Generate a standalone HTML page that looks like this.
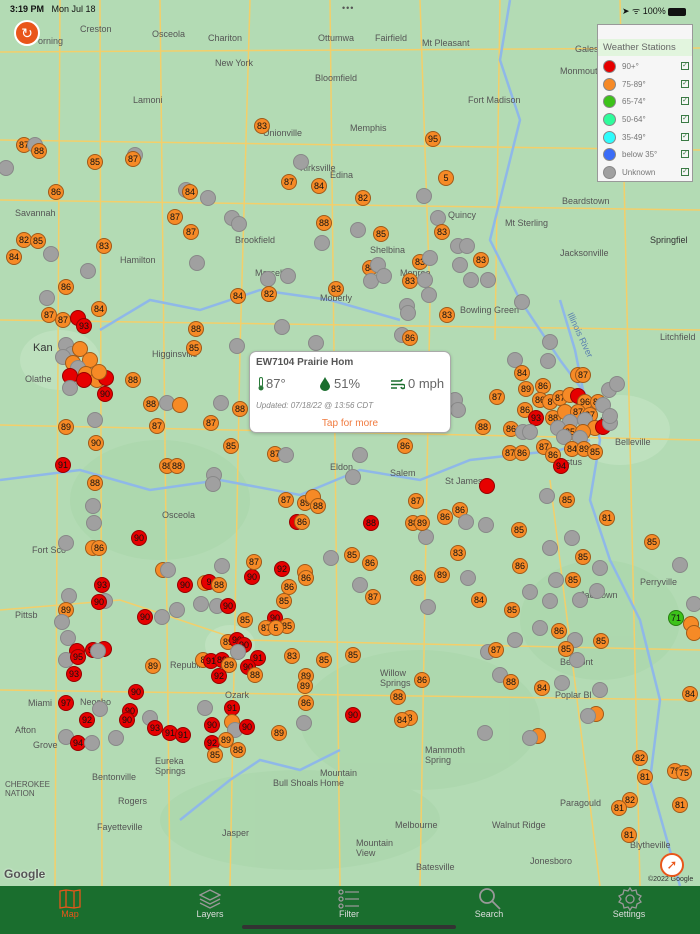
<!DOCTYPE html>
<html><head><meta charset="utf-8">
<style>
*{margin:0;padding:0;box-sizing:border-box}
body{width:700px;height:934px;overflow:hidden;position:relative;font-family:"Liberation Sans",sans-serif;background:#b3dbb4}
.m{position:absolute;width:16px;height:16px;border-radius:50%;font-size:9px;line-height:14px;text-align:center;color:#111;border:1px solid rgba(0,0,0,.35);margin:-8px 0 0 -8px}
.o{background:#f68a26}.r{background:#e60000}.g{background:#a0a0a0;border-color:#888}.gr{background:#3cc21a}
.l{position:absolute;font-size:9px;color:#555;white-space:nowrap}
#tab{position:absolute;left:0;top:886px;width:700px;height:48px;background:#1a6e2e}
.t{position:absolute;top:23px;font-size:9px;color:#ddd;width:80px;text-align:center}
.lg span.n{position:absolute;left:24px;top:3px;font-size:8px;color:#777}
</style></head><body>
<svg width="700" height="886" style="position:absolute;left:0;top:0">
<g fill="#a6d4a7" opacity=".45"><ellipse cx="160" cy="500" rx="90" ry="60"/><ellipse cx="420" cy="720" rx="120" ry="70"/><ellipse cx="300" cy="820" rx="140" ry="50"/><ellipse cx="600" cy="620" rx="80" ry="60"/></g>
<g fill="#c5e5c4" opacity=".6"><ellipse cx="60" cy="360" rx="40" ry="30"/><ellipse cx="620" cy="430" rx="50" ry="35"/><ellipse cx="230" cy="645" rx="25" ry="20"/></g>
<g fill="none" stroke="#f3cf6a" stroke-width="1.5">
<path d="M0 52 L700 48"/><path d="M0 320 L700 330"/><path d="M60 0 L55 886"/><path d="M100 0 L102 886"/><path d="M250 0 L240 350 L230 886"/><path d="M0 425 L700 440"/><path d="M0 610 L120 600 L240 640 L700 650"/><path d="M420 0 L430 300 L420 886"/><path d="M550 480 L600 886"/><path d="M0 690 L700 700"/><path d="M160 0 L170 886"/><path d="M330 0 L340 886"/><path d="M500 0 L495 340"/><path d="M0 200 L700 210"/><path d="M0 140 L700 150"/><path d="M620 0 L640 886"/>
</g>
<g fill="none" stroke="#8fb8e8" stroke-width="2.5">
<path d="M510 0 L500 60 L520 120 L500 200 L490 240 L520 300 L560 360 L590 400 L600 440 L590 500 L610 560 L640 620 L660 700 L650 780 L680 886"/>
<path d="M0 480 L80 470 L150 490 L220 480 L300 495 L360 470 L420 480 L470 460 L560 450 L590 440"/>
<path d="M100 330 L150 300 L200 310 L260 290 L330 300 L400 320"/>
<path d="M560 300 L575 350 L585 400"/>
<path d="M180 820 L230 780 L260 760 L300 770 L340 750"/>
</g>
</svg>
<div class="l" style="left:80px;top:24px">Creston</div><div class="l" style="left:152px;top:29px">Osceola</div><div class="l" style="left:208px;top:33px">Chariton</div><div class="l" style="left:318px;top:33px">Ottumwa</div><div class="l" style="left:375px;top:33px">Fairfield</div><div class="l" style="left:422px;top:38px">Mt Pleasant</div><div class="l" style="left:575px;top:44px">Galesb</div><div class="l" style="left:38px;top:36px">orning</div>
<div class="l" style="left:215px;top:58px">New York</div><div class="l" style="left:560px;top:66px">Monmouth</div><div class="l" style="left:315px;top:73px">Bloomfield</div><div class="l" style="left:468px;top:95px">Fort Madison</div><div class="l" style="left:133px;top:95px">Lamoni</div><div class="l" style="left:350px;top:123px">Memphis</div><div class="l" style="left:263px;top:128px">Unionville</div><div class="l" style="left:300px;top:163px">Kirksville</div><div class="l" style="left:330px;top:170px">Edina</div><div class="l" style="left:15px;top:208px">Savannah</div><div class="l" style="left:235px;top:235px">Brookfield</div><div class="l" style="left:120px;top:255px">Hamilton</div><div class="l" style="left:370px;top:245px">Shelbina</div><div class="l" style="left:560px;top:248px">Jacksonville</div><div class="l" style="left:650px;top:235px;color:#333">Springfiel</div><div class="l" style="left:505px;top:218px">Mt Sterling</div><div class="l" style="left:448px;top:210px">Quincy</div><div class="l" style="left:562px;top:196px">Beardstown</div><div class="l" style="left:400px;top:268px">Monroe</div><div class="l" style="left:255px;top:268px">Marceline</div><div class="l" style="left:320px;top:293px">Moberly</div><div class="l" style="left:460px;top:305px">Bowling Green</div><div class="l" style="left:33px;top:342px;font-size:11px;color:#333">Kan</div><div class="l" style="left:25px;top:374px">Olathe</div><div class="l" style="left:152px;top:349px">Higginsville</div><div class="l" style="left:330px;top:462px">Eldon</div><div class="l" style="left:162px;top:510px">Osceola</div><div class="l" style="left:32px;top:545px">Fort Sco</div><div class="l" style="left:15px;top:610px">Pittsb</div><div class="l" style="left:170px;top:660px">Republic</div><div class="l" style="left:225px;top:690px">Ozark</div><div class="l" style="left:80px;top:697px">Neosho</div><div class="l" style="left:28px;top:698px">Miami</div><div class="l" style="left:15px;top:725px">Afton</div><div class="l" style="left:33px;top:740px">Grove</div><div class="l" style="left:155px;top:756px">Eureka</div><div class="l" style="left:155px;top:766px">Springs</div><div class="l" style="left:92px;top:772px">Bentonville</div><div class="l" style="left:118px;top:796px">Rogers</div><div class="l" style="left:97px;top:822px">Fayetteville</div><div class="l" style="left:5px;top:780px;font-size:8px">CHEROKEE<br>NATION</div><div class="l" style="left:273px;top:778px">Bull Shoals</div><div class="l" style="left:320px;top:768px">Mountain<br>Home</div><div class="l" style="left:222px;top:828px">Jasper</div><div class="l" style="left:395px;top:820px">Melbourne</div><div class="l" style="left:356px;top:838px">Mountain<br>View</div><div class="l" style="left:416px;top:862px">Batesville</div><div class="l" style="left:492px;top:820px">Walnut Ridge</div><div class="l" style="left:530px;top:856px">Jonesboro</div><div class="l" style="left:630px;top:840px">Blytheville</div><div class="l" style="left:560px;top:798px">Paragould</div><div class="l" style="left:425px;top:745px">Mammoth<br>Spring</div><div class="l" style="left:380px;top:668px">Willow<br>Springs</div><div class="l" style="left:560px;top:657px">Belmont</div><div class="l" style="left:640px;top:577px">Perryville</div><div class="l" style="left:615px;top:437px">Belleville</div><div class="l" style="left:555px;top:457px">Festus</div><div class="l" style="left:600px;top:413px;font-size:12px;color:#333">uis</div><div class="l" style="left:660px;top:332px">Litchfield</div><div class="l" style="left:445px;top:476px">St James</div><div class="l" style="left:580px;top:590px">Jacktown</div><div class="l" style="left:555px;top:690px">Poplar Bl</div><div class="l" style="left:390px;top:468px">Salem</div><div class="l" style="left:556px;top:330px;color:#5a7fb0;transform:rotate(65deg)">Illinois River</div>

<div id="mk">
<div class="m o" style="left:24px;top:145px">87</div><div class="m g" style="left:35px;top:145px"></div><div class="m o" style="left:39px;top:151px">88</div><div class="m g" style="left:6px;top:168px"></div><div class="m o" style="left:95px;top:162px">85</div><div class="m g" style="left:135px;top:155px"></div><div class="m o" style="left:133px;top:159px">87</div><div class="m o" style="left:262px;top:126px">83</div><div class="m o" style="left:433px;top:139px">95</div><div class="m g" style="left:301px;top:162px"></div><div class="m o" style="left:289px;top:182px">87</div><div class="m o" style="left:319px;top:186px">84</div><div class="m g" style="left:186px;top:190px"></div><div class="m o" style="left:190px;top:192px">84</div><div class="m g" style="left:208px;top:198px"></div><div class="m o" style="left:363px;top:198px">82</div><div class="m o" style="left:56px;top:192px">86</div><div class="m o" style="left:175px;top:217px">87</div><div class="m o" style="left:191px;top:232px">87</div><div class="m g" style="left:232px;top:218px"></div><div class="m g" style="left:239px;top:224px"></div><div class="m o" style="left:324px;top:223px">88</div><div class="m g" style="left:322px;top:243px"></div><div class="m g" style="left:358px;top:230px"></div><div class="m o" style="left:381px;top:234px">85</div><div class="m g" style="left:424px;top:196px"></div><div class="m o" style="left:446px;top:178px">5</div><div class="m g" style="left:438px;top:218px"></div><div class="m o" style="left:442px;top:232px">83</div><div class="m g" style="left:458px;top:246px"></div><div class="m g" style="left:467px;top:246px"></div><div class="m o" style="left:481px;top:260px">83</div><div class="m g" style="left:460px;top:265px"></div><div class="m g" style="left:471px;top:280px"></div><div class="m g" style="left:488px;top:280px"></div><div class="m o" style="left:420px;top:262px">83</div><div class="m o" style="left:24px;top:240px">82</div><div class="m o" style="left:38px;top:241px">85</div><div class="m g" style="left:51px;top:254px"></div><div class="m o" style="left:14px;top:257px">84</div><div class="m o" style="left:104px;top:246px">83</div><div class="m g" style="left:88px;top:271px"></div><div class="m g" style="left:197px;top:263px"></div><div class="m g" style="left:268px;top:279px"></div><div class="m g" style="left:288px;top:276px"></div><div class="m o" style="left:269px;top:294px">82</div><div class="m o" style="left:238px;top:296px">84</div><div class="m o" style="left:336px;top:289px">83</div><div class="m o" style="left:370px;top:268px">84</div><div class="m g" style="left:378px;top:265px"></div><div class="m g" style="left:371px;top:281px"></div><div class="m g" style="left:384px;top:276px"></div><div class="m o" style="left:410px;top:281px">83</div><div class="m g" style="left:425px;top:280px"></div><div class="m g" style="left:429px;top:295px"></div><div class="m g" style="left:407px;top:306px"></div><div class="m g" style="left:408px;top:313px"></div><div class="m g" style="left:430px;top:258px"></div><div class="m o" style="left:447px;top:315px">83</div><div class="m g" style="left:522px;top:302px"></div><div class="m o" style="left:66px;top:287px">86</div><div class="m o" style="left:99px;top:309px">84</div><div class="m g" style="left:47px;top:298px"></div><div class="m o" style="left:49px;top:315px">87</div><div class="m o" style="left:63px;top:320px">87</div><div class="m r" style="left:78px;top:318px"></div><div class="m r" style="left:84px;top:326px">93</div><div class="m o" style="left:196px;top:329px">88</div><div class="m o" style="left:194px;top:348px">85</div><div class="m g" style="left:282px;top:327px"></div><div class="m g" style="left:316px;top:343px"></div><div class="m g" style="left:237px;top:346px"></div><div class="m g" style="left:402px;top:335px"></div><div class="m o" style="left:410px;top:338px">86</div><div class="m g" style="left:550px;top:342px"></div><div class="m g" style="left:515px;top:360px"></div><div class="m o" style="left:522px;top:373px">84</div><div class="m g" style="left:548px;top:361px"></div><div class="m o" style="left:578px;top:375px"></div><div class="m o" style="left:583px;top:375px">87</div>
<div class="m g" style="left:66px;top:345px"></div><div class="m g" style="left:72px;top:354px"></div><div class="m o" style="left:80px;top:349px"></div><div class="m o" style="left:90px;top:360px"></div><div class="m g" style="left:63px;top:357px"></div><div class="m o" style="left:73px;top:363px"></div><div class="m g" style="left:78px;top:368px"></div><div class="m o" style="left:86px;top:374px"></div><div class="m o" style="left:97px;top:380px"></div><div class="m r" style="left:106px;top:378px"></div><div class="m r" style="left:70px;top:376px"></div><div class="m r" style="left:84px;top:380px"></div><div class="m o" style="left:99px;top:372px"></div><div class="m g" style="left:70px;top:388px"></div><div class="m r" style="left:105px;top:394px">90</div><div class="m o" style="left:133px;top:380px">88</div><div class="m o" style="left:66px;top:427px">89</div><div class="m g" style="left:95px;top:420px"></div><div class="m o" style="left:96px;top:443px">90</div><div class="m r" style="left:63px;top:465px">91</div><div class="m o" style="left:95px;top:483px">88</div><div class="m g" style="left:93px;top:506px"></div><div class="m g" style="left:94px;top:523px"></div><div class="m g" style="left:66px;top:543px"></div><div class="m o" style="left:93px;top:548px"></div><div class="m o" style="left:99px;top:548px">86</div>
<div class="m o" style="left:151px;top:404px">88</div><div class="m g" style="left:167px;top:403px"></div><div class="m o" style="left:180px;top:405px"></div><div class="m o" style="left:157px;top:426px">87</div><div class="m g" style="left:221px;top:403px"></div><div class="m o" style="left:211px;top:423px">87</div><div class="m o" style="left:240px;top:409px">88</div><div class="m o" style="left:231px;top:446px">85</div><div class="m o" style="left:167px;top:466px">88</div><div class="m o" style="left:177px;top:466px">88</div><div class="m g" style="left:214px;top:475px"></div><div class="m g" style="left:213px;top:484px"></div><div class="m o" style="left:275px;top:454px">87</div><div class="m g" style="left:286px;top:455px"></div><div class="m g" style="left:353px;top:420px"></div><div class="m g" style="left:360px;top:455px"></div><div class="m g" style="left:353px;top:477px"></div><div class="m o" style="left:405px;top:446px">86</div><div class="m g" style="left:455px;top:400px"></div><div class="m g" style="left:458px;top:410px"></div><div class="m o" style="left:483px;top:427px">88</div><div class="m o" style="left:497px;top:397px">87</div><div class="m o" style="left:511px;top:429px">86</div><div class="m g" style="left:523px;top:432px"></div><div class="m o" style="left:510px;top:453px">87</div><div class="m o" style="left:522px;top:453px">86</div><div class="m o" style="left:526px;top:389px">89</div><div class="m o" style="left:543px;top:386px">86</div>
<div class="m o" style="left:540px;top:400px">86</div><div class="m o" style="left:550px;top:402px">8</div><div class="m o" style="left:560px;top:398px">87</div><div class="m o" style="left:570px;top:395px"></div><div class="m r" style="left:578px;top:396px"></div><div class="m o" style="left:585px;top:402px">96</div><div class="m o" style="left:598px;top:402px">85</div><div class="m o" style="left:525px;top:410px">86</div><div class="m r" style="left:536px;top:418px">93</div><div class="m o" style="left:553px;top:418px">88</div><div class="m o" style="left:565px;top:412px"></div><div class="m o" style="left:578px;top:412px">87</div><div class="m o" style="left:590px;top:415px">87</div><div class="m g" style="left:570px;top:422px"></div><div class="m g" style="left:585px;top:420px"></div><div class="m o" style="left:595px;top:428px"></div><div class="m r" style="left:603px;top:427px"></div><div class="m g" style="left:558px;top:428px"></div><div class="m g" style="left:610px;top:423px"></div><div class="m o" style="left:570px;top:432px">85</div><div class="m o" style="left:583px;top:432px"></div><div class="m g" style="left:580px;top:438px"></div><div class="m g" style="left:564px;top:437px"></div><div class="m g" style="left:530px;top:432px"></div><div class="m o" style="left:544px;top:447px">87</div><div class="m o" style="left:553px;top:455px">86</div><div class="m o" style="left:572px;top:449px">84</div><div class="m o" style="left:584px;top:449px">89</div><div class="m r" style="left:561px;top:466px">94</div><div class="m o" style="left:595px;top:452px">85</div><div class="m g" style="left:609px;top:390px"></div><div class="m g" style="left:617px;top:384px"></div><div class="m g" style="left:603px;top:405px"></div><div class="m g" style="left:610px;top:416px"></div>
<div class="m r" style="left:487px;top:486px"></div><div class="m o" style="left:567px;top:500px">85</div><div class="m g" style="left:547px;top:496px"></div><div class="m o" style="left:416px;top:501px">87</div><div class="m o" style="left:445px;top:517px">86</div><div class="m o" style="left:460px;top:510px">86</div><div class="m g" style="left:466px;top:522px"></div><div class="m g" style="left:486px;top:525px"></div><div class="m o" style="left:519px;top:530px">85</div><div class="m g" style="left:550px;top:548px"></div><div class="m g" style="left:572px;top:538px"></div><div class="m o" style="left:583px;top:557px">85</div><div class="m o" style="left:607px;top:518px">81</div><div class="m o" style="left:652px;top:542px">85</div><div class="m o" style="left:458px;top:553px">83</div><div class="m g" style="left:426px;top:537px"></div><div class="m o" style="left:413px;top:523px">88</div><div class="m o" style="left:422px;top:523px">89</div><div class="m r" style="left:371px;top:523px">88</div><div class="m o" style="left:352px;top:555px">85</div><div class="m o" style="left:370px;top:563px">86</div><div class="m g" style="left:331px;top:558px"></div><div class="m g" style="left:360px;top:585px"></div><div class="m o" style="left:373px;top:597px">87</div><div class="m o" style="left:418px;top:578px">86</div><div class="m o" style="left:442px;top:575px">89</div><div class="m g" style="left:468px;top:578px"></div><div class="m o" style="left:520px;top:566px">86</div><div class="m g" style="left:556px;top:580px"></div><div class="m o" style="left:573px;top:580px">85</div><div class="m g" style="left:600px;top:568px"></div><div class="m g" style="left:580px;top:600px"></div><div class="m g" style="left:597px;top:591px"></div><div class="m g" style="left:530px;top:592px"></div><div class="m g" style="left:550px;top:601px"></div><div class="m o" style="left:479px;top:600px">84</div><div class="m o" style="left:512px;top:610px">85</div><div class="m g" style="left:428px;top:607px"></div><div class="m g" style="left:540px;top:628px"></div><div class="m g" style="left:515px;top:640px"></div><div class="m o" style="left:559px;top:631px">86</div><div class="m g" style="left:575px;top:640px"></div><div class="m o" style="left:601px;top:641px">85</div><div class="m o" style="left:566px;top:649px">85</div><div class="m g" style="left:577px;top:660px"></div><div class="m g" style="left:488px;top:652px"></div><div class="m o" style="left:496px;top:650px">87</div><div class="m g" style="left:500px;top:675px"></div><div class="m o" style="left:511px;top:682px">88</div><div class="m o" style="left:542px;top:688px">84</div><div class="m g" style="left:562px;top:683px"></div><div class="m g" style="left:600px;top:690px"></div><div class="m o" style="left:422px;top:680px">86</div><div class="m o" style="left:398px;top:697px">88</div><div class="m o" style="left:410px;top:718px">8</div><div class="m o" style="left:402px;top:720px">84</div><div class="m o" style="left:596px;top:714px"></div><div class="m g" style="left:588px;top:716px"></div><div class="m g" style="left:485px;top:733px"></div><div class="m o" style="left:538px;top:736px"></div><div class="m g" style="left:530px;top:738px"></div><div class="m o" style="left:353px;top:655px">85</div><div class="m o" style="left:324px;top:660px">85</div><div class="m o" style="left:292px;top:656px">83</div><div class="m o" style="left:306px;top:676px">89</div><div class="m o" style="left:305px;top:686px">89</div><div class="m o" style="left:306px;top:703px">86</div><div class="m g" style="left:304px;top:723px"></div><div class="m r" style="left:353px;top:715px">90</div><div class="m o" style="left:279px;top:733px">89</div>
<div class="m o" style="left:286px;top:500px">87</div><div class="m o" style="left:305px;top:503px">89</div><div class="m o" style="left:313px;top:497px"></div><div class="m o" style="left:318px;top:506px">88</div><div class="m r" style="left:297px;top:522px"></div><div class="m o" style="left:302px;top:522px">86</div>
<div class="m r" style="left:139px;top:538px">90</div><div class="m o" style="left:163px;top:570px"></div><div class="m g" style="left:168px;top:570px"></div><div class="m r" style="left:185px;top:585px">90</div><div class="m r" style="left:102px;top:585px">93</div><div class="m g" style="left:105px;top:601px"></div><div class="m r" style="left:99px;top:602px">90</div><div class="m g" style="left:69px;top:596px"></div><div class="m o" style="left:66px;top:610px">89</div><div class="m g" style="left:62px;top:622px"></div><div class="m g" style="left:68px;top:638px"></div><div class="m r" style="left:145px;top:617px">90</div><div class="m g" style="left:162px;top:617px"></div><div class="m g" style="left:177px;top:610px"></div><div class="m g" style="left:201px;top:604px"></div><div class="m o" style="left:205px;top:583px"></div><div class="m r" style="left:209px;top:582px">9</div><div class="m o" style="left:219px;top:585px">88</div><div class="m g" style="left:222px;top:566px"></div><div class="m r" style="left:252px;top:577px">90</div><div class="m o" style="left:254px;top:562px">87</div><div class="m r" style="left:282px;top:569px">92</div><div class="m o" style="left:305px;top:572px"></div><div class="m o" style="left:306px;top:578px">86</div><div class="m o" style="left:289px;top:587px">86</div><div class="m o" style="left:284px;top:601px">85</div><div class="m g" style="left:217px;top:606px"></div><div class="m r" style="left:228px;top:606px">90</div><div class="m o" style="left:245px;top:620px">85</div><div class="m r" style="left:275px;top:618px">90</div><div class="m o" style="left:287px;top:626px">85</div><div class="m o" style="left:266px;top:628px">87</div><div class="m o" style="left:276px;top:628px">5</div><div class="m o" style="left:228px;top:642px">89</div><div class="m r" style="left:237px;top:640px">90</div><div class="m r" style="left:244px;top:645px">90</div><div class="m g" style="left:238px;top:652px"></div><div class="m o" style="left:203px;top:660px">8</div><div class="m r" style="left:211px;top:661px">91</div><div class="m r" style="left:222px;top:660px">89</div><div class="m o" style="left:229px;top:665px">89</div><div class="m r" style="left:258px;top:658px">91</div><div class="m r" style="left:248px;top:667px">90</div><div class="m o" style="left:255px;top:675px">88</div><div class="m r" style="left:219px;top:676px">92</div><div class="m o" style="left:153px;top:666px">89</div><div class="m r" style="left:136px;top:692px">90</div><div class="m r" style="left:77px;top:651px"></div><div class="m r" style="left:93px;top:650px">91</div><div class="m r" style="left:104px;top:649px"></div><div class="m g" style="left:98px;top:651px"></div><div class="m g" style="left:66px;top:660px"></div><div class="m r" style="left:78px;top:657px">95</div><div class="m r" style="left:74px;top:674px">93</div><div class="m r" style="left:66px;top:703px">97</div><div class="m r" style="left:87px;top:720px">92</div><div class="m g" style="left:100px;top:709px"></div><div class="m r" style="left:130px;top:711px">90</div><div class="m r" style="left:127px;top:720px">90</div><div class="m g" style="left:150px;top:718px"></div><div class="m r" style="left:155px;top:728px">93</div><div class="m r" style="left:170px;top:733px">91</div><div class="m r" style="left:183px;top:735px">91</div><div class="m g" style="left:66px;top:737px"></div><div class="m r" style="left:78px;top:743px">94</div><div class="m g" style="left:92px;top:743px"></div><div class="m g" style="left:116px;top:738px"></div><div class="m g" style="left:205px;top:708px"></div><div class="m r" style="left:232px;top:708px">91</div><div class="m r" style="left:212px;top:725px">90</div><div class="m o" style="left:232px;top:722px"></div><div class="m g" style="left:235px;top:730px"></div><div class="m r" style="left:247px;top:727px">90</div><div class="m r" style="left:212px;top:743px">92</div><div class="m o" style="left:226px;top:740px">89</div><div class="m o" style="left:238px;top:750px">88</div><div class="m o" style="left:215px;top:755px">85</div>
<div class="m gr" style="left:676px;top:618px">71</div><div class="m o" style="left:691px;top:624px"></div><div class="m o" style="left:694px;top:633px"></div><div class="m g" style="left:680px;top:565px"></div><div class="m g" style="left:694px;top:604px"></div><div class="m o" style="left:690px;top:694px">84</div><div class="m o" style="left:640px;top:758px">82</div><div class="m o" style="left:645px;top:777px">81</div><div class="m o" style="left:675px;top:771px">79</div><div class="m o" style="left:684px;top:773px">75</div><div class="m o" style="left:630px;top:800px">82</div><div class="m o" style="left:619px;top:808px">81</div><div class="m o" style="left:680px;top:805px">81</div><div class="m o" style="left:629px;top:835px">81</div>
</div>

<div style="position:absolute;left:14px;top:20px;width:26px;height:26px;border-radius:50%;background:#e9561a;border:2px solid #fff;color:#fff;font-size:14px;line-height:22px;text-align:center">↻</div>
<div style="position:absolute;left:10px;top:4px;font-size:9px;color:#111;font-weight:bold">3:19 PM&nbsp;&nbsp; <span style="font-weight:normal">Mon Jul 18</span></div>
<div style="position:absolute;left:342px;top:3px;font-size:9px;color:#555;letter-spacing:1px">•••</div>
<div style="position:absolute;left:622px;top:4px;font-size:9px;color:#111">➤ ᯤ 100% <span style="display:inline-block;width:18px;height:8px;background:#111;border-radius:2px;vertical-align:middle"></span></div>

<div class="lg" style="position:absolute;left:597px;top:24px;width:96px;height:158px;background:#f6f6f6;border:1px solid #999">
<div style="position:absolute;left:0;top:14px;width:94px;height:17px;background:#e2f5de"></div>
<div style="position:absolute;left:5px;top:17px;font-size:9.5px;color:#666">Weather Stations</div>
<div style="position:absolute;left:0;top:34px;width:94px">
<div style="height:17.7px;position:relative"><span style="position:absolute;left:5px;top:1px;width:13px;height:13px;border-radius:50%;background:#e60000;border:1px solid #888"></span><span class="n">90+°</span><span style="position:absolute;left:83px;top:3px;width:8px;height:8px;border:1px solid #3a7a44;font-size:7px;line-height:6px;color:#3a7a44;text-align:center">✓</span></div>
<div style="height:17.7px;position:relative"><span style="position:absolute;left:5px;top:1px;width:13px;height:13px;border-radius:50%;background:#f68a26;border:1px solid #888"></span><span class="n">75-89°</span><span style="position:absolute;left:83px;top:3px;width:8px;height:8px;border:1px solid #3a7a44;font-size:7px;line-height:6px;color:#3a7a44;text-align:center">✓</span></div>
<div style="height:17.7px;position:relative"><span style="position:absolute;left:5px;top:1px;width:13px;height:13px;border-radius:50%;background:#3cc21a;border:1px solid #888"></span><span class="n">65-74°</span><span style="position:absolute;left:83px;top:3px;width:8px;height:8px;border:1px solid #3a7a44;font-size:7px;line-height:6px;color:#3a7a44;text-align:center">✓</span></div>
<div style="height:17.7px;position:relative"><span style="position:absolute;left:5px;top:1px;width:13px;height:13px;border-radius:50%;background:#2efc9c;border:1px solid #888"></span><span class="n">50-64°</span><span style="position:absolute;left:83px;top:3px;width:8px;height:8px;border:1px solid #3a7a44;font-size:7px;line-height:6px;color:#3a7a44;text-align:center">✓</span></div>
<div style="height:17.7px;position:relative"><span style="position:absolute;left:5px;top:1px;width:13px;height:13px;border-radius:50%;background:#2efcfc;border:1px solid #888"></span><span class="n">35-49°</span><span style="position:absolute;left:83px;top:3px;width:8px;height:8px;border:1px solid #3a7a44;font-size:7px;line-height:6px;color:#3a7a44;text-align:center">✓</span></div>
<div style="height:17.7px;position:relative"><span style="position:absolute;left:5px;top:1px;width:13px;height:13px;border-radius:50%;background:#3a6cf7;border:1px solid #888"></span><span class="n">below 35°</span><span style="position:absolute;left:83px;top:3px;width:8px;height:8px;border:1px solid #3a7a44;font-size:7px;line-height:6px;color:#3a7a44;text-align:center">✓</span></div>
<div style="height:17.7px;position:relative"><span style="position:absolute;left:5px;top:1px;width:13px;height:13px;border-radius:50%;background:#a0a0a0;border:1px solid #888"></span><span class="n">Unknown</span><span style="position:absolute;left:83px;top:3px;width:8px;height:8px;border:1px solid #3a7a44;font-size:7px;line-height:6px;color:#3a7a44;text-align:center">✓</span></div>
</div></div>

<div style="position:absolute;left:249px;top:351px;width:202px;height:82px;background:#fff;border:1px solid #aaa;border-radius:7px;box-shadow:0 1px 3px rgba(0,0,0,.2)">
<div style="position:absolute;left:6px;top:5px;font-size:10px;font-weight:bold;color:#555">EW7104 Prairie Hom</div>
<svg style="position:absolute;left:7px;top:25px" width="8" height="14" viewBox="0 0 8 14"><rect x="2.5" y="0.5" width="3" height="9" rx="1.5" fill="none" stroke="#2a7a3a"/><circle cx="4" cy="11" r="2.5" fill="#2a7a3a"/></svg>
<div style="position:absolute;left:16px;top:24px;font-size:13px;color:#666">87°</div>
<svg style="position:absolute;left:70px;top:25px" width="10" height="14" viewBox="0 0 10 14"><path d="M5 0 C3 4 0 7 0 9.5 A5 4.5 0 0 0 10 9.5 C10 7 7 4 5 0Z" fill="#1a6e2e"/></svg>
<div style="position:absolute;left:84px;top:24px;font-size:13px;color:#666">51%</div>
<svg style="position:absolute;left:141px;top:27px" width="14" height="11" viewBox="0 0 14 11" fill="none" stroke="#1a6e2e" stroke-width="1.6"><path d="M0 2H9A2 2 0 1 0 7 0M0 5.5H12A2 2 0 1 1 10 8M0 9H6"/></svg>
<div style="position:absolute;left:158px;top:24px;font-size:13px;color:#666">0 mph</div>
<div style="position:absolute;left:6px;top:49px;font-size:8px;font-style:italic;color:#888">Updated: 07/18/22 @ 13:56 CDT</div>
<div style="position:absolute;left:0;width:200px;top:66px;font-size:10px;text-align:center;color:#f07b40">Tap for more</div>
</div>

<div style="position:absolute;left:4px;top:867px;font-size:12px;font-weight:bold;color:#555;text-shadow:0 0 2px #fff">Google</div>
<div style="position:absolute;left:648px;top:876px;font-size:7px;color:#333">©2022 Google</div>
<div style="position:absolute;left:660px;top:853px;width:24px;height:24px;border-radius:50%;background:#fff;border:2px solid #e9561a;color:#e9561a;font-size:13px;line-height:20px;text-align:center">➚</div>

<div id="tab">
<svg style="position:absolute;left:59px;top:3px" width="22" height="20" viewBox="0 0 22 20" fill="none" stroke="#e9561a" stroke-width="1.3"><path d="M1 2 L7 1 L15 2 L21 1 L21 18 L15 19 L7 18 L1 19 Z M7 1 V18 M15 2 V19"/></svg>
<div class="t" style="left:30px;color:#e9561a">Map</div>
<svg style="position:absolute;left:199px;top:3px" width="22" height="20" viewBox="0 0 22 20" fill="none" stroke="#999" stroke-width="1.3"><path d="M11 1 L21 6 L11 11 L1 6 Z M1 10 L11 15 L21 10 M1 14 L11 19 L21 14"/></svg>
<div class="t" style="left:170px">Layers</div>
<svg style="position:absolute;left:338px;top:2px" width="22" height="22" viewBox="0 0 22 22" fill="none" stroke="#999" stroke-width="1.3"><circle cx="3" cy="4" r="2"/><circle cx="3" cy="11" r="2"/><circle cx="3" cy="18" r="2"/><path d="M7 4H21M7 11H21M7 18H21"/></svg>
<div class="t" style="left:309px">Filter</div>
<svg style="position:absolute;left:478px;top:1px" width="24" height="24" viewBox="0 0 24 24" fill="none" stroke="#999" stroke-width="1.8"><circle cx="9" cy="9" r="7"/><path d="M14 14 L22 22"/></svg>
<div class="t" style="left:449px">Search</div>
<svg style="position:absolute;left:618px;top:1px" width="24" height="24" viewBox="0 0 24 24" fill="none" stroke="#999" stroke-width="1.3"><circle cx="12" cy="12" r="4"/><path d="M12 1 L14 4 L18 3 L19 7 L23 9 L21 12 L23 15 L19 17 L18 21 L14 20 L12 23 L10 20 L6 21 L5 17 L1 15 L3 12 L1 9 L5 7 L6 3 L10 4 Z"/></svg>
<div class="t" style="left:589px">Settings</div>
<div style="position:absolute;left:242px;top:39px;width:214px;height:4px;border-radius:2px;background:#333"></div>
</div>
</body></html>
